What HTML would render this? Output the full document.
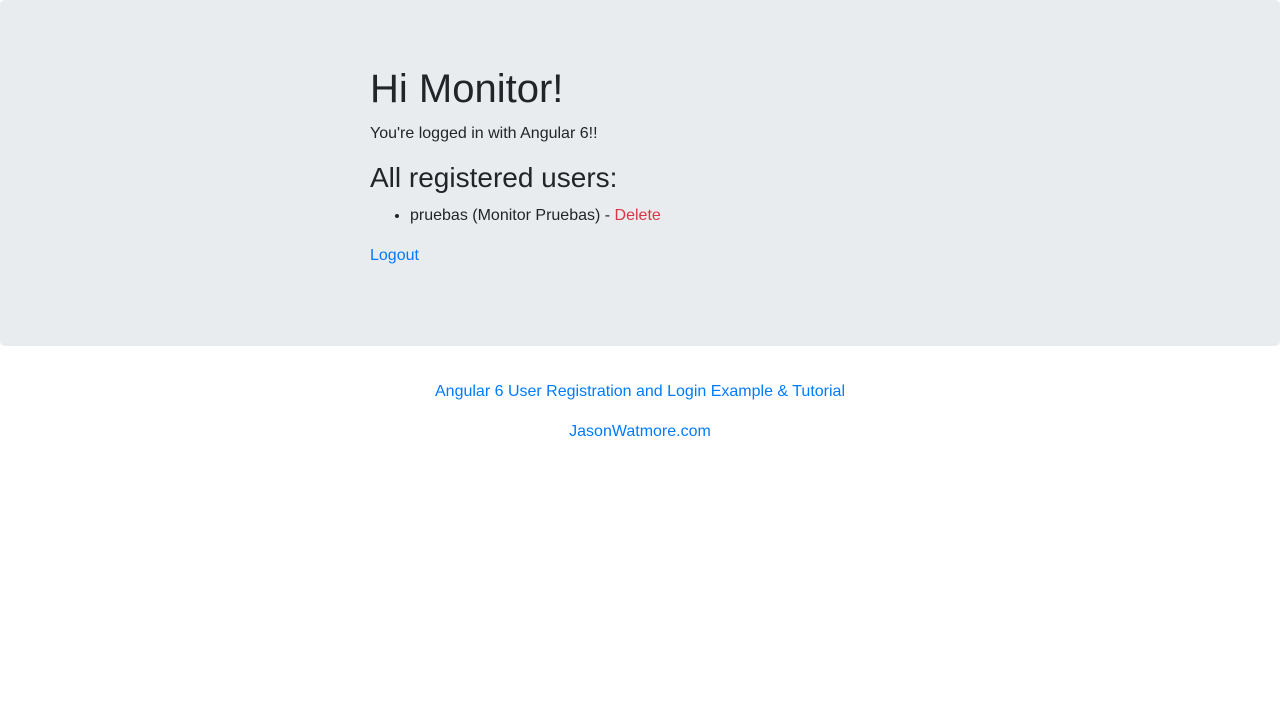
<!DOCTYPE html>
<html><head><meta charset="utf-8"><style>
*{box-sizing:border-box}
body{margin:0;font-family:"Liberation Sans",Arial,sans-serif;font-size:16px;line-height:1.5;color:#212529;background:#fff}
.jumbo{background:#e9ecef;border-radius:4.8px;padding:64px 0;margin-bottom:32px;height:346px}
.inner{margin-left:370px;width:540px}
h1{font-size:40px;font-weight:500;line-height:1.2;margin:0 0 8px;position:relative;top:1px}
h3{font-size:28px;font-weight:500;line-height:1.2;margin:0 0 8px;position:relative;top:1px}
p,li{position:relative;top:2px}
p{margin:0 0 16px}
ul{margin:0 0 16px;padding-left:40px}
a{color:#007bff;text-decoration:none}
.del{color:#dc3545}
.c{text-align:center}
</style></head><body>
<div class="jumbo"><div class="inner">
<h1>Hi Monitor!</h1>
<p>You're logged in with Angular 6!!</p>
<h3>All registered users:</h3>
<ul><li>pruebas (Monitor Pruebas) - <a class="del">Delete</a></li></ul>
<p><a>Logout</a></p>
</div></div>
<div class="c">
<p><a>Angular 6 User Registration and Login Example &amp; Tutorial</a></p>
<p><a>JasonWatmore.com</a></p>
</div>
</body></html>
